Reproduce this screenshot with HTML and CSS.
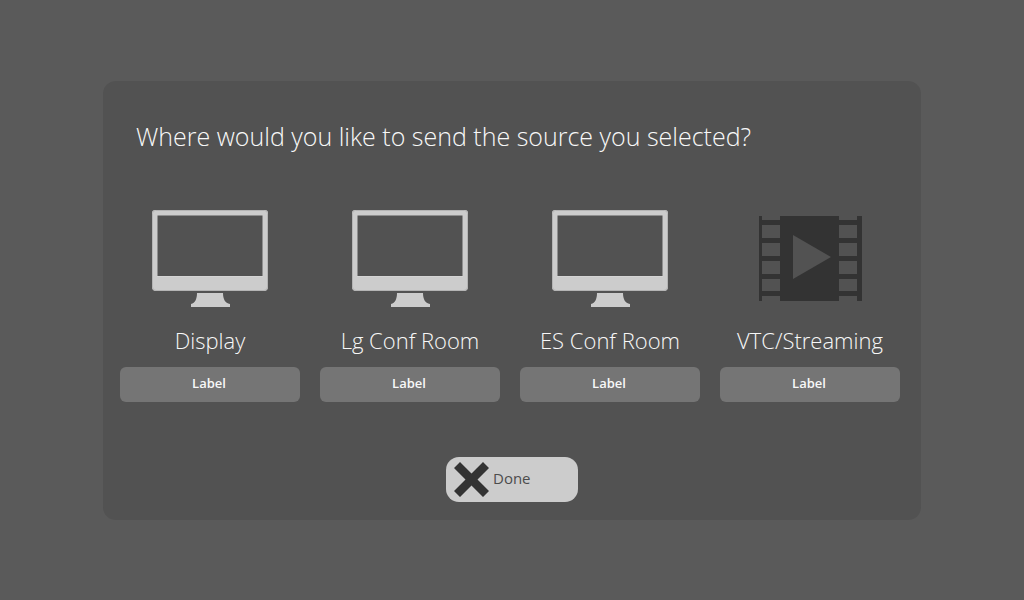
FILE: index.html
```html
<!DOCTYPE html>
<html lang="en">
<head>
<meta charset="utf-8">
<meta name="viewport" content="width=device-width, initial-scale=1">
<title>Send source</title>
<link rel="stylesheet" href="styles.css">
</head>
<body>
<svg class="sprite" aria-hidden="true">
  <symbol id="monitor" viewBox="0 0 116 98">
    <path fill="#cccccc" fill-rule="evenodd" d="M3 0H113Q116 0 116 3V77Q116 81 112 81H4Q0 81 0 77V3Q0 0 3 0ZM5.500 5.500V66H110.500V5.500Z"/>
    <path fill="none" stroke="#b4b4b4" d="M3.500 .5H112.500Q115.500 .5 115.500 3.500V77Q115.500 80.500 112 80.500H4Q.5 80.500 .5 77V3.500Q.5 .5 3.500 .5Z"/>
    <path fill="none" stroke="#d4d4d4" d="M5 66.500H111"/>
    <path fill="#cccccc" d="M45 83H71C71 89 73 93 78 94V97H39V94C43 93 45 89 45 83Z"/>
  </symbol>
  <symbol id="film" viewBox="0 0 104 85">
    <path fill="#333333" fill-rule="evenodd" d="M1 0H4V4H22V0H81V4H99V0H104V85H99V80H81V85H22V80H4V85H1ZM4 9V22H22V9ZM4 27V40H22V27ZM4 45V58H22V45ZM4 63V75H22V63ZM81 9V22H99V9ZM81 27V40H99V27ZM81 45V58H99V45ZM81 63V75H99V63ZM35 19V63L73 41Z"/>
  </symbol>
</svg>
<main class="dialog">
  <h1 class="title">Where would you like to send the source you selected?</h1>
  <div class="targets">
    <section class="target">
      <button class="pick" type="button"><svg class="icon" aria-hidden="true"><use href="#monitor"/></svg><span class="name">Display</span></button>
      <button class="label" type="button">Label</button>
    </section>
    <section class="target">
      <button class="pick" type="button"><svg class="icon" aria-hidden="true"><use href="#monitor"/></svg><span class="name">Lg Conf Room</span></button>
      <button class="label" type="button">Label</button>
    </section>
    <section class="target">
      <button class="pick" type="button"><svg class="icon" aria-hidden="true"><use href="#monitor"/></svg><span class="name">ES Conf Room</span></button>
      <button class="label" type="button">Label</button>
    </section>
    <section class="target">
      <button class="pick" type="button"><svg class="icon film" aria-hidden="true"><use href="#film"/></svg><span class="name">VTC/Streaming</span></button>
      <button class="label" type="button">Label</button>
    </section>
  </div>
  <button class="done" type="button">
    <svg class="cross" viewBox="0 0 36 38" aria-hidden="true"><path fill="#333333" d="M6 2L17.500 13.500L29 2L35 8L23.500 19.500L35 31L29 37L17.500 25.500L6 37L0 31L11.500 19.500L0 8Z"/></svg>
    <span class="done-text">Done</span>
  </button>
</main>
</body>
</html>
```
FILE: styles.css
```css
* {
  box-sizing: border-box;
}

body {
  margin: 0;
  min-height: 100vh;
  padding: 16px;
  display: flex;
  align-items: center;
  justify-content: center;
  background: #5a5a5a;
  color: #f8f8f8;
  font-family: "Open Sans", sans-serif;
  font-weight: 300;
}

.sprite {
  position: absolute;
  width: 0;
  height: 0;
}

.dialog {
  width: 100%;
  max-width: 818px;
  padding: 36px 21px 18px 17px;
  display: flex;
  flex-direction: column;
  border-radius: 13px;
  background: #525252;
}

.title {
  margin: 0;
  padding: 0 16px;
  font-size: 25px;
  line-height: 38px;
  font-weight: 300;
}

.targets {
  margin-top: 55px;
  display: grid;
  grid-template-columns: repeat(auto-fit, minmax(160px, 1fr));
  gap: 20px;
}

.target {
  display: flex;
  flex-direction: column;
  gap: 11px;
}

button {
  border: 0;
  font: inherit;
  color: inherit;
  cursor: pointer;
}

.pick {
  padding: 0;
  display: flex;
  flex-direction: column;
  align-items: center;
  gap: 17px;
  background: none;
}

.icon {
  width: 116px;
  height: 98px;
}

.film {
  width: 104px;
  height: 85px;
  margin: 6px 0 7px;
}

.name {
  font-size: 22px;
  line-height: 31px;
}

.label {
  height: 35px;
  padding: 0 12px 2px 10px;
  border-radius: 6px;
  background: #757575;
  font-size: 13px;
  font-weight: 600;
}

.done {
  width: 132px;
  height: 45px;
  margin: 55px 0 0 4px;
  padding: 0 8px;
  align-self: center;
  display: flex;
  align-items: center;
  gap: 3px;
  border-radius: 13px;
  background: #cccccc;
  color: #4c4c4c;
  font-size: 15px;
  font-weight: 400;
}

.done-text {
  padding-bottom: 2px;
}

.cross {
  width: 36px;
  height: 38px;
}
```
